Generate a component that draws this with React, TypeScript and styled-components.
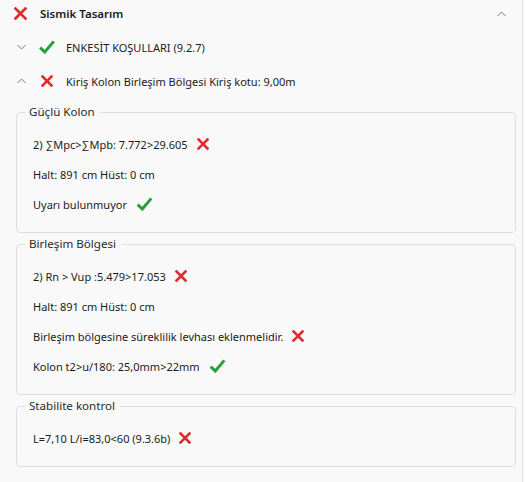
import React from 'react';
import styled, {createGlobalStyle} from 'styled-components';

const GlobalStyle = createGlobalStyle`
	html, body {
		margin: 0;
		padding: 0;
		background: #f9f9f9;
	}
	body {
		font-family: 'Noto Sans', 'Segoe UI', sans-serif;
		font-size: 11px;
		color: #1b1b1b;
	}
`;

const Panel = styled.div`
	width: 523px;
	height: 482px;
	box-sizing: border-box;
	background: #f9f9f9;
	border-right: 1px solid #e3e3e3;
	display: flex;
	flex-direction: column;
`;

const TopRow = styled.div`
	height: 30px;
	display: flex;
	align-items: center;
	padding: 0 16px 3px 14px;
	gap: 13px;
	box-sizing: border-box;
`;

const Title = styled.div`
	font-weight: 600;
	font-size: 11.5px;
	flex: 1;
`;

const SubRow = styled.div`
	height: 34px;
	display: flex;
	align-items: center;
	padding-left: 17px;
`;

const IconSlot = styled.div`
	width: 18px;
	margin-left: 12px;
	margin-right: 10px;
	display: flex;
	justify-content: center;
	align-items: center;
`;

const Boxes = styled.div`
	display: flex;
	flex-direction: column;
	gap: 3px;
	padding: 6px 6px 0 16px;
`;

const Box = styled.fieldset`
	margin: 0;
	border: 1px solid #dedede;
	border-radius: 4px;
	padding: 9px 0 13px 8px;
	min-width: 0;
`;

const Legend = styled.legend`
	padding: 0 5px 0 4px;
	margin: 0;
	color: #2a2a2a;
	font-size: 11.6px;
	line-height: 16px;
`;

const Line = styled.div`
	height: 30px;
	display: flex;
	align-items: center;
	gap: 9px;
	padding-left: 8px;
`;

const Chevron = ({up}: {up?: boolean}) => (
	<svg width="9" height="6" viewBox="0 0 9 6">
		<path
			d={up ? 'M0.5 5 L4.5 1 L8.5 5' : 'M0.5 1 L4.5 5 L8.5 1'}
			fill="none"
			stroke="#7a7a7a"
			strokeWidth="1"
		/>
	</svg>
);

const Cross = ({size = 12}: {size?: number}) => (
	<svg width={size} height={size} viewBox="0 0 12 12">
		<path
			d="M1.5 1.5 L10.5 10.5 M10.5 1.5 L1.5 10.5"
			stroke="#e02b2b"
			strokeWidth="2.6"
			strokeLinecap="square"
		/>
	</svg>
);

const Check = ({w = 16, h = 14}: {w?: number; h?: number}) => (
	<svg width={w} height={h} viewBox="0 0 16 14">
		<path
			d="M1.2 7.6 L5.8 12 L14.8 1.4"
			fill="none"
			stroke="#25a13a"
			strokeWidth="3"
			strokeLinejoin="miter"
		/>
	</svg>
);

const App: React.FunctionComponent = (): React.ReactElement => {
	return (
		<Panel>
			<GlobalStyle />
			<TopRow>
				<Cross size={13} />
				<Title>Sismik Tasarım</Title>
				<Chevron up />
			</TopRow>
			<SubRow>
				<Chevron />
				<IconSlot>
					<Check />
				</IconSlot>
				ENKESİT KOŞULLARI (9.2.7)
			</SubRow>
			<SubRow>
				<Chevron up />
				<IconSlot>
					<Cross />
				</IconSlot>
				Kiriş Kolon Birleşim Bölgesi Kiriş kotu: 9,00m
			</SubRow>
			<Boxes>
				<Box>
					<Legend>Güçlü Kolon</Legend>
					<Line>
						2) ∑Mpc&gt;∑Mpb: 7.772&gt;29.605 <Cross />
					</Line>
					<Line>Halt: 891 cm Hüst: 0 cm</Line>
					<Line>
						Uyarı bulunmuyor <Check w={17} h={14} />
					</Line>
				</Box>
				<Box>
					<Legend>Birleşim Bölgesi</Legend>
					<Line>
						2) Rn &gt; Vup :5.479&gt;17.053 <Cross />
					</Line>
					<Line>Halt: 891 cm Hüst: 0 cm</Line>
					<Line>
						Birleşim bölgesine süreklilik levhası eklenmelidir. <Cross />
					</Line>
					<Line>
						Kolon t2&gt;u/180: 25,0mm&gt;22mm <Check w={17} h={14} />
					</Line>
				</Box>
				<Box>
					<Legend>Stabilite kontrol</Legend>
					<Line>
						L=7,10 L/i=83,0&lt;60 (9.3.6b) <Cross />
					</Line>
				</Box>
			</Boxes>
		</Panel>
	);
};

export default App;
